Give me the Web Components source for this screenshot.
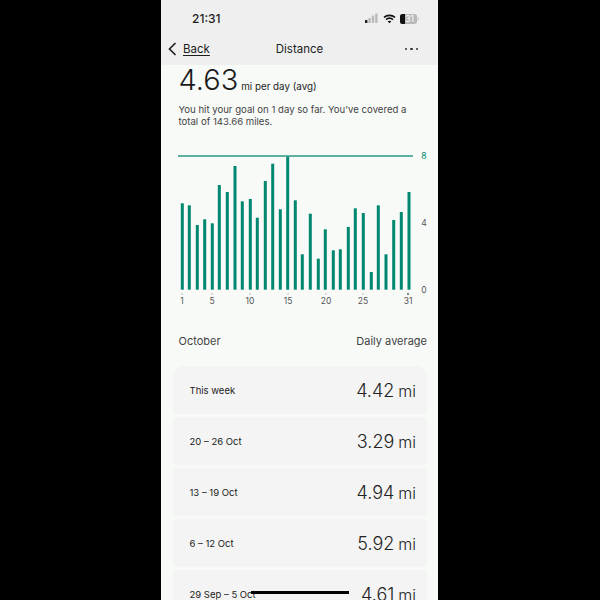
<!DOCTYPE html>
<html>
<head>
<meta charset="utf-8">
<title>Distance</title>
<style>
  html, body { margin: 0; height: 600px; background: #000; overflow: hidden; }
  body { display: flex; justify-content: center; font-family: "Inter", "Liberation Sans", sans-serif; }
</style>
</head>
<body>
<phone-screen>
  <nav-header slot="top"></nav-header>
  <summary-block value="4.63" unit="mi per day (avg)">You hit your goal on 1 day so far. You've covered a total of 143.66 miles.</summary-block>
  <bar-chart></bar-chart>
  <list-heading left="October" right="Daily average"></list-heading>
  <week-list>
    <week-row label="This week" value="4.42" first></week-row>
    <week-row label="20 – 26 Oct" value="3.29"></week-row>
    <week-row label="13 – 19 Oct" value="4.94"></week-row>
    <week-row label="6 – 12 Oct" value="5.92"></week-row>
    <week-row label="29 Sep – 5 Oct" value="4.61"></week-row>
  </week-list>
</phone-screen>
<script>
class PhoneScreen extends HTMLElement {
  constructor() {
    super();
    this.attachShadow({ mode: "open" });
    this.shadowRoot.innerHTML = `
      <style>
        :host { display: flex; flex-direction: column; position: relative; width: 277px; height: 600px; margin-left: -1px; background: #f8faf8; overflow: hidden; }
        .scroll { flex: 1; min-height: 0; overflow: hidden; }
        .home { position: absolute; left: 90px; top: 591px; width: 98px; height: 3px; background: #000; }
      </style>
      <slot name="top"></slot>
      <div class="scroll"><slot></slot></div>
      <div class="home"></div>`;
  }
}
customElements.define("phone-screen", PhoneScreen);

class NavHeader extends HTMLElement {
  constructor() {
    super();
    this.attachShadow({ mode: "open" });
    this.shadowRoot.innerHTML = `
      <style>
        :host { display: block; height: 65px; background: #eeefee; color: #1d1d1d; }
        .status { display: flex; align-items: center; justify-content: space-between; height: 37px; padding: 0 19px 0 31px; }
        .time { font-size: 12px; font-weight: 500; }
        .icons { display: flex; align-items: center; gap: 4px; }
        .nav { display: grid; grid-template-columns: 1fr auto 1fr; align-items: center; height: 24px; padding: 0 7px; font-size: 11.500px; }
        .back { display: flex; align-items: center; gap: 6px; }
        .back span { text-decoration: underline; text-underline-offset: 2px; }
        .more { justify-self: end; display: flex; gap: 3px; margin-right: 13px; }
        .more i { width: 2.400px; height: 2.400px; border-radius: 50%; background: #333; }
      </style>
      <div class="status">
        <span class="time">21:31</span>
        <span class="icons">
          <svg width="14" height="11" viewBox="0 0 14 11">
            <rect x="0" y="7" width="2.400" height="3" fill="#222"/>
            <rect x="3.400" y="5" width="2.400" height="5" fill="#bbb"/>
            <rect x="6.800" y="2.500" width="2.400" height="7.500" fill="#bbb"/>
            <rect x="10.200" y="0.500" width="2.400" height="9.500" fill="#bbb"/>
          </svg>
          <svg width="13" height="10" viewBox="0 0 13 10" fill="none" stroke="#111" stroke-width="1.700">
            <path d="M1 3.400C4.200.6 8.800.6 12 3.400M3 5.600c2.100-1.700 4.900-1.700 7 0"/>
            <path d="M6.500 9.300 4.700 7.400c1.100-.8 2.500-.8 3.600 0z" fill="#111" stroke="none"/>
          </svg>
          <svg width="19" height="10" viewBox="0 0 19 10">
            <rect x="0" y="0" width="17" height="10" rx="2.500" fill="#b9b9b9"/>
            <path d="M2.500 0H5V10H2.500A2.500 2.500 0 0 1 0 7.500V2.500A2.500 2.500 0 0 1 2.500 0Z" fill="#111"/>
            <rect x="17.600" y="3.500" width="1" height="3" fill="#bbb"/>
            <text x="9.500" y="8.200" font-size="8.500" text-anchor="middle" fill="#fff" font-family="Inter, sans-serif">31</text>
          </svg>
        </span>
      </div>
      <div class="nav">
        <div class="back">
          <svg width="9" height="14" viewBox="0 0 9 14" fill="none" stroke="#222" stroke-width="1.700"><path d="M7.500 1 1.500 7l6 6"/></svg>
          <span>Back</span>
        </div>
        <div>Distance</div>
        <div class="more"><i></i><i></i><i></i></div>
      </div>`;
  }
}
customElements.define("nav-header", NavHeader);

class SummaryBlock extends HTMLElement {
  connectedCallback() {
    this.attachShadow({ mode: "open" });
    this.shadowRoot.innerHTML = `
      <style>
        :host { display: block; padding: 0 18px 0 17.500px; color: #222; }
        .big { display: flex; align-items: baseline; gap: 3px; height: 30px; }
        .num { font-size: 29px; line-height: 30px; font-weight: 300; color: #1b1b1b; }
        .unit { font-size: 9.800px; }
        p { margin: 9px 0 0; font-size: 9.600px; line-height: 12px; color: #444; }
      </style>
      <div class="big"><span class="num">${this.getAttribute("value")}</span><span class="unit">${this.getAttribute("unit")}</span></div>
      <p><slot></slot></p>`;
  }
}
customElements.define("summary-block", SummaryBlock);

class BarChart extends HTMLElement {
  connectedCallback() {
    this.attachShadow({ mode: "open" });
    // x centre and top of each day bar, read off the reference
    const bars = [[182.3,203.3],[189.3,205.3],[197.3,225],[204.7,219.3],[212.3,223.3],[219.3,185],[227.3,192],[235,166],[242.3,201.3],[250.3,199],[257.3,217.7],[265.3,181],[272.7,163.7],[280.3,209.3],[287.7,156.7],[295.3,200.3],[302.3,254.3],[310.3,213.7],[318.3,258.7],[325.3,229.3],[333.3,250.3],[340.3,249.3],[348.3,227],[355.3,208.3],[363.3,213],[371.3,272],[378.3,205.3],[386,254.3],[393.7,220],[401.3,212],[409,192]];
    const ox = 161, oy = 145;
    const rects = bars.map(([x, top]) =>
      `<rect x="${x - ox - 1.5}" y="${top - oy}" width="3" height="${289.7 - top}" fill="#00876f"/>`).join("");
    const days = [[182,"1"],[212,"5"],[250,"10"],[288,"15"],[326,"20"],[363,"25"],[408,"31"]];
    const ticks = days.map(([x, t], i) =>
      `<rect x="${x - ox - .5}" y="148" width="1" height="2" fill="${i == 6 ? "#111" : "#bbb"}"/>
       <text x="${x - ox}" y="159" text-anchor="middle">${t}</text>`).join("");
    const ys = [[156,"8","#00876f"],[223,"4","#555"],[290,"0","#555"]];
    const yLabels = ys.map(([y, t, c]) =>
      `<text x="${424 - ox}" y="${y - oy + 3}" text-anchor="middle" style="fill:${c}">${t}</text>`).join("");
    this.shadowRoot.innerHTML = `
      <style>
        :host { display: block; height: 205px; padding-top: 17px; box-sizing: border-box; }
        svg { display: block; }
        text { font: 8.500px Inter, "Liberation Sans", sans-serif; fill: #555; }
      </style>
      <svg width="277" height="170" viewBox="0 0 277 170">
        <rect x="17" y="10" width="235" height="2" fill="#5fb0a0"/>
        ${rects}${ticks}${yLabels}
      </svg>`;
  }
}
customElements.define("bar-chart", BarChart);

class ListHeading extends HTMLElement {
  connectedCallback() {
    this.attachShadow({ mode: "open" });
    this.shadowRoot.innerHTML = `
      <style>
        :host { display: flex; justify-content: space-between; box-sizing: border-box; padding: 1px 11px 0 17.500px; font-size: 11px; line-height: 14px; color: #444; height: 33px; }
      </style>
      <span>${this.getAttribute("left")}</span><span>${this.getAttribute("right")}</span>`;
  }
}
customElements.define("list-heading", ListHeading);

class WeekList extends HTMLElement {
  constructor() {
    super();
    this.attachShadow({ mode: "open" });
    this.shadowRoot.innerHTML = `
      <style>:host { display: flex; flex-direction: column; gap: 3px; padding: 0 11px 0 12px; }</style>
      <slot></slot>`;
  }
}
customElements.define("week-list", WeekList);

class WeekRow extends HTMLElement {
  connectedCallback() {
    this.attachShadow({ mode: "open" });
    const radius = this.hasAttribute("first") ? "10px 10px 3px 3px" : "3px";
    this.shadowRoot.innerHTML = `
      <style>
        :host { display: flex; align-items: center; justify-content: space-between; height: 48px; padding: 0 11px 0 16.500px; background: #f3f4f3; border-radius: ${radius}; color: #222; }
        .label { font-size: 9.500px; }
        .val { font-size: 18px; font-weight: 300; }
        .val small { font-size: 16px; margin-left: 4px; }
      </style>
      <span class="label">${this.getAttribute("label")}</span>
      <span class="val">${this.getAttribute("value")}<small>mi</small></span>`;
  }
}
customElements.define("week-row", WeekRow);
</script>
</body>
</html>
